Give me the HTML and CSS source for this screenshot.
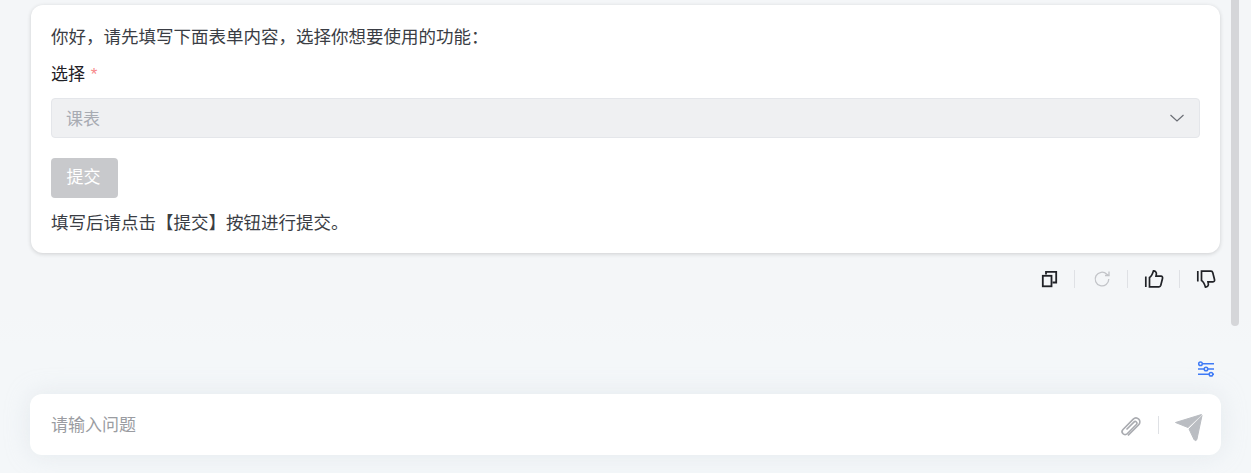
FILE: index.html
```html
<!DOCTYPE html>
<html lang="zh-CN">

<head>
    <meta charset="UTF-8">
    <meta name="viewport" content="width=device-width, initial-scale=1.0">
    <title>Chat</title>
    <link rel="stylesheet" href="styles.css">
</head>

<body>

    <div class="chat">
        <div class="card">
            <p class="line">你好，请先填写下面表单内容，选择你想要使用的功能：</p>
            <div class="label">选择 <span class="required">*</span></div>
            <div class="select">
                <span class="select-text">课表</span>
                <svg width="16" height="16" viewBox="0 0 16 16" fill="none" stroke="#6b6e75" stroke-width="1.2">
                    <path d="M1.5 5l6.5 6 6.5-6" />
                </svg>
            </div>
            <button class="submit" disabled>提交</button>
            <p class="line">填写后请点击【提交】按钮进行提交。</p>
        </div>

        <div class="actions">
            <svg width="20" height="20" viewBox="0 0 20 20" fill="none" stroke="#202227" stroke-width="1.8">
                <rect x="4.800" y="6.800" width="8.700" height="10.500" />
                <path d="M8 5.500V2.800h10.200v10.700h-3.700" />
            </svg>
            <span class="sep"></span>
            <svg width="20" height="20" viewBox="0 0 20 20" fill="none" stroke="#c2c4c8" stroke-width="1.3">
                <path d="M17.800 10a6.800 6.800 0 1 1-2-4.800L18 6.500" />
                <path d="M18 2.500v4h-4" />
            </svg>
            <span class="sep"></span>
            <svg class="thumb-up" width="20" height="20" viewBox="0 0 20 20" fill="none" stroke="#202227" stroke-width="1.700">
                <path d="M1.800 7.500V18" />
                <path d="M5.500 17.800V8.500C7.500 7.500 8.500 5 9.500 1.800c2 0 3.300 1.700 2.800 3.700L12 7.200h5c1.300 0 1.800 1.100 1.500 2.300l-1.700 6.800c-.3 1-.8 1.500-1.800 1.500z" />
            </svg>
            <span class="sep"></span>
            <svg width="20" height="20" viewBox="0 0 20 20" fill="none" stroke="#202227" stroke-width="1.700">
                <g transform="matrix(1 0 0 -1 0 20)">
                    <path d="M1.800 7.500V18" />
                    <path d="M5.500 17.800V8.500C7.500 7.500 8.500 5 9.500 1.800c2 0 3.300 1.700 2.800 3.700L12 7.200h5c1.300 0 1.800 1.100 1.500 2.300l-1.700 6.800c-.3 1-.8 1.500-1.800 1.500z" />
                </g>
            </svg>
        </div>

        <div class="tools">
            <svg width="18" height="18" viewBox="0 0 18 18" fill="none" stroke="#3f7bf6" stroke-width="1.500">
                <path d="M1 3.700h1M5.500 3.700H17M1 9h6M11 9h6M1 14.300h11M16 14.300h1" />
                <circle cx="3.500" cy="3.700" r="1.800" />
                <circle cx="9" cy="9" r="1.800" />
                <circle cx="14" cy="14.300" r="1.800" />
            </svg>
        </div>

        <div class="input-box">
            <span class="placeholder">请输入问题</span>
            <svg class="clip" width="24" height="24" viewBox="0 0 24 24" fill="none" stroke="#a9abb0" stroke-width="1.600">
                <path d="M9 20.500l10.500-10.500c1.800-1.800 1.800-4.300.2-5.800s-4-1.500-5.700.2L4 14.500c-1.200 1.200-1.200 3 0 4.200s3 1.200 4.200 0l9.200-9.200c.8-.8.8-1.800 0-2.500s-1.700-.7-2.500.1L7.500 14.500" />
            </svg>
            <span class="sep sep-input"></span>
            <svg width="30" height="34" viewBox="0 0 30 34" fill="#babdc2" stroke="#babdc2" stroke-linejoin="round">
                <path d="M1.500 14.500L27.500 6.500 14 19.500z" />
                <path d="M28 7.500L23 31c-.5 2-2 2-3 .5L15 21z" />
            </svg>
        </div>

        <div class="scrollbar"></div>
    </div>

</body>

</html>
```

FILE: styles.css
```css
* {
    box-sizing: border-box;
}

body {
    font-family: "Noto Sans CJK SC", "Noto Sans", sans-serif;
    background-color: #f4f6f8;
    margin: 0;
    padding: 0;
}

.chat {
    position: relative;
    height: 473px;
    padding: 5px 30px 0;
    overflow: hidden;
    background: linear-gradient(#f4f6f8 315px, #f4f7f9 345px);
}

.card {
    background-color: #fff;
    border-radius: 12px;
    margin: 0 1px;
    padding: 19px 20px 0;
    height: 248px;
    box-shadow: 0 1px 4px rgba(0, 0, 0, 0.16);
}

.line {
    margin: 0;
    font-size: 17.5px;
    line-height: 24px;
    color: #3a3d44;
}

.label {
    height: 24px;
    margin-top: 13px;
    font-size: 17px;
    line-height: 24px;
    color: #1f2126;
}

.required {
    margin-left: 2px;
    font-family: "Liberation Sans", sans-serif;
    color: #f78989;
}

.select {
    display: flex;
    align-items: center;
    justify-content: space-between;
    height: 40px;
    margin-top: 13px;
    padding: 0 14px;
    background-color: #eff0f2;
    border: 1px solid #e4e6ea;
    border-radius: 4px;
    font-size: 17px;
    color: #a8abb2;
}

.select-text {
    padding-bottom: 2px;
}

.submit {
    display: block;
    width: 67px;
    height: 40px;
    margin: 20px 0 12px;
    padding: 0 2px 5px 0;
    background-color: #c8c9cc;
    color: #fff;
    border: none;
    border-radius: 4px;
    font-family: inherit;
    font-size: 17px;
}

.actions {
    display: flex;
    align-items: center;
    justify-content: flex-end;
    gap: 16px;
    height: 20px;
    margin-top: 16px;
    padding-right: 5px;
}

.thumb-up {
    margin-right: -1px;
}

.sep {
    width: 1px;
    height: 18px;
    background-color: #dfe1e5;
}

.tools {
    display: flex;
    justify-content: flex-end;
    height: 18px;
    margin-top: 71px;
    padding-right: 6px;
}

.input-box {
    display: flex;
    align-items: center;
    height: 61px;
    margin-top: 16px;
    padding: 0 17px 0 21px;
    background-color: #fff;
    border-radius: 12px;
    box-shadow: 0 0 24px rgba(200, 208, 218, 0.35);
}

.placeholder {
    flex: 1;
    padding-bottom: 2px;
    font-size: 17px;
    color: #9a9ca1;
}

.clip {
    margin-top: 4px;
}

.sep-input {
    margin: 0 15px;
}

.scrollbar {
    position: absolute;
    top: 0;
    left: 1231px;
    width: 8px;
    height: 326px;
    background-color: #d5d6d9;
    border-radius: 0 0 4px 4px;
}
```
